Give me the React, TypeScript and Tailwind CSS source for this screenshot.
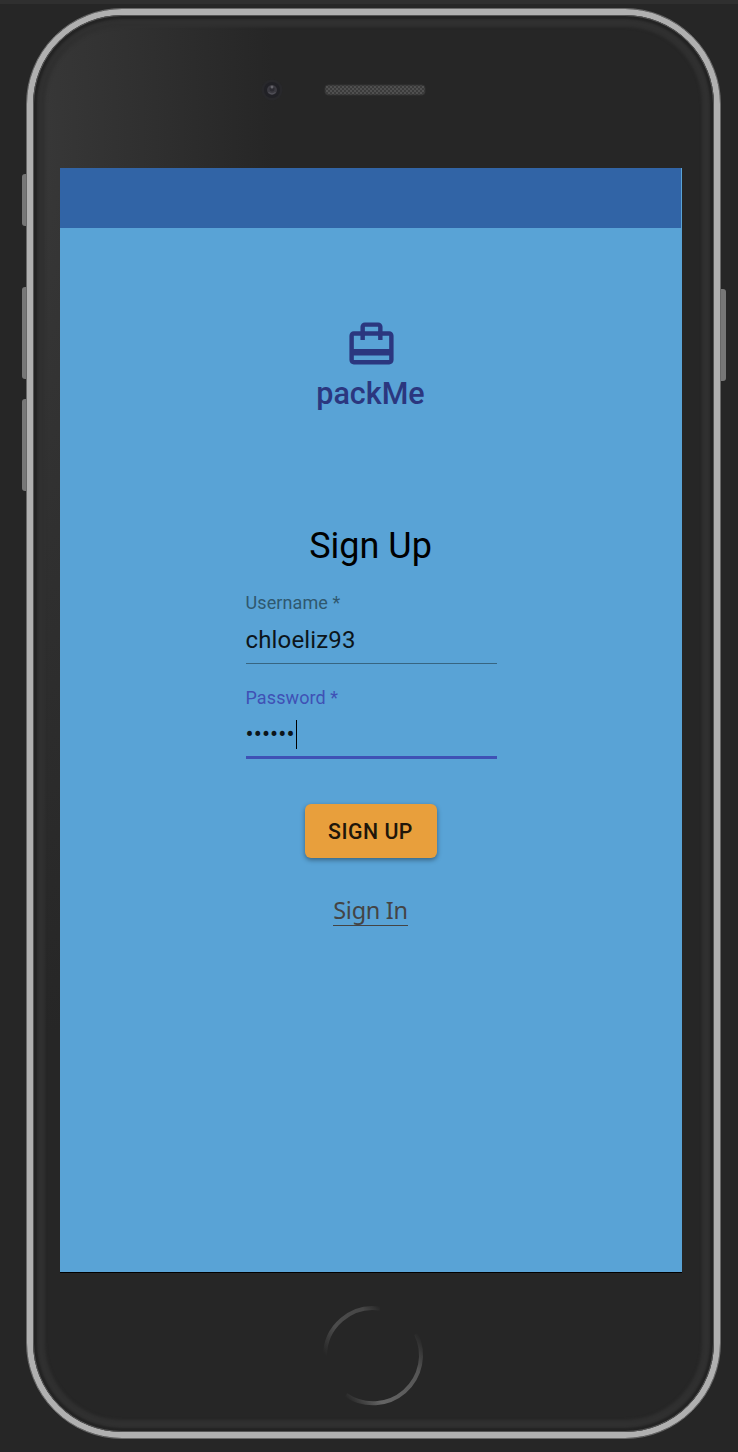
import React from "react";

function CardTravelIcon() {
  return (
    <svg viewBox="0 0 24 24" className="h-[53px] w-[53px] fill-[#2b377f]" aria-hidden="true">
      <path d="M20 6h-3V4c0-1.11-.89-2-2-2H9c-1.11 0-2 .89-2 2v2H4c-1.11 0-2 .89-2 2v11c0 1.11.89 2 2 2h16c1.11 0 2-.89 2-2V8c0-1.11-.89-2-2-2zM9 4h6v2H9V4zm11 15H4v-2h16v2zm0-5H4V8h3v2h2V8h6v2h2V8h3v6z" />
    </svg>
  );
}

function HomeButton() {
  return (
    <svg viewBox="0 0 110 110" className="h-[110px] w-[110px]" fill="none" aria-hidden="true">
      <defs>
        <linearGradient id="arcTop" x1="8" y1="55" x2="64" y2="8" gradientUnits="userSpaceOnUse">
          <stop offset="0" stopColor="#262626" />
          <stop offset=".35" stopColor="#4c4c4c" />
          <stop offset=".8" stopColor="#464646" />
          <stop offset="1" stopColor="#262626" />
        </linearGradient>
        <linearGradient id="arcBottom" x1="102" y1="35" x2="28" y2="97" gradientUnits="userSpaceOnUse">
          <stop offset="0" stopColor="#262626" />
          <stop offset=".25" stopColor="#555" />
          <stop offset=".75" stopColor="#646464" />
          <stop offset="1" stopColor="#262626" />
        </linearGradient>
      </defs>
      <path d="M7 55A48 48 0 0 1 62 7.500" stroke="url(#arcTop)" strokeWidth="4" />
      <path d="M98 33A48 48 0 0 1 28 94" stroke="url(#arcBottom)" strokeWidth="4" />
    </svg>
  );
}

function Speaker() {
  return (
    <svg viewBox="0 0 102 12" className="h-3 w-[102px]" aria-hidden="true">
      <defs>
        <pattern id="mesh" width="4" height="4" patternUnits="userSpaceOnUse">
          <rect width="4" height="4" fill="#3b3b3b" />
          <rect width="2" height="2" fill="#505050" />
          <rect x="2" y="2" width="2" height="2" fill="#505050" />
        </pattern>
      </defs>
      <rect x="1" y="1" width="100" height="10" rx="3" fill="url(#mesh)" stroke="#333" />
    </svg>
  );
}

function Camera() {
  return (
    <svg viewBox="0 0 24 24" className="h-6 w-6" aria-hidden="true">
      <circle cx="12" cy="12" r="10.500" fill="#28282b" />
      <circle cx="12" cy="12" r="8" fill="#212126" />
      <circle cx="12" cy="12" r="5" fill="#3b3a41" />
      <circle cx="12" cy="11" r="2.500" fill="#2c2b32" />
      <circle cx="12" cy="9" r="1.500" fill="#66656c" />
      <path d="M8.500 14.500q3.500 3 7 0" stroke="#55545c" fill="none" />
    </svg>
  );
}

function SignUpForm() {
  return (
    <form className="flex flex-col items-center" onSubmit={(e) => e.preventDefault()}>
      <h1 className="mt-[108px] pr-px text-[36px] leading-[48px] text-black">Sign Up</h1>
      <div className="mt-[21px] w-[251px]">
        <label className="block h-[24px] text-[18px] leading-[24px] tracking-[0.1px] text-[#2f586f]">Username *</label>
        <div className="mt-[10px] flex h-[39px] items-start border-b border-[#376581] text-[24px] leading-[30px] tracking-[0.150px] text-[#0c151b]">chloeliz93</div>
      </div>
      <div className="mt-[22px] w-[251px]">
        <label className="block h-[24px] text-[18px] leading-[24px] tracking-[0.1px] text-[#3f51b5]">Password *</label>
        <div className="mt-[10px] flex h-[39px] items-start border-b-3 border-[#3f51b5] text-[24px] leading-[29px] text-[#0c151b]">
          <span className="tracking-[0.100px]">••••••</span>
          <span className="ml-px h-[29px] w-px bg-black" />
        </div>
      </div>
      <button className="mt-[45px] mr-px h-[54px] w-[132px] rounded-[6px] bg-[#e89f3c] pt-px text-[21.300px] font-medium tracking-[0.500px] text-[#20160a] shadow-[0_2px_5px_rgba(0,0,0,0.4)]">SIGN UP</button>
      <a className="mt-[37px] mr-px border-b border-[#444] font-['Noto_Sans',sans-serif] text-[23.500px] leading-[30px] tracking-[-0.300px] text-[#444]">Sign In</a>
    </form>
  );
}

export default function App() {
  return (
    <div className="relative h-[1452px] w-[738px] overflow-hidden bg-[#262626] pt-2 pl-[26px] font-[Roboto,sans-serif]">
      <div className="absolute inset-x-0 top-0 h-1 bg-[#2f2f2f]" />
      <div className="absolute top-[174px] left-[22px] h-[52px] w-[5px] rounded-l-[3px] bg-[#777]" />
      <div className="absolute top-[287px] left-[22px] h-[92px] w-[5px] rounded-l-[3px] bg-[#777]" />
      <div className="absolute top-[399px] left-[22px] h-[92px] w-[5px] rounded-l-[3px] bg-[#777]" />
      <div className="absolute top-[289px] left-[720px] h-[92px] w-[6px] rounded-r-[3px] bg-[#777]" />
      <div className="relative h-[1431px] w-[695px] rounded-[96px] border border-[#686868] bg-[#262626]">
        <div className="h-full rounded-[95px] border-[6px] border-[#b0b0b0]">
          <div className="flex h-full flex-col rounded-[89px] border border-[#555] bg-[radial-gradient(ellipse_240px_900px_at_0px_120px,#383838_0%,#303030_45%,#262626_100%)] pl-[26px] shadow-[inset_0_0_2px_3px_#232323,inset_0_0_3px_11px_#303030]">
            <div className="flex h-[152px] pt-[62px] pl-[200px]">
              <Camera />
              <div className="mt-[6px] ml-[40px]"><Speaker /></div>
            </div>
            <main className="h-[1105px] w-[622px] border-b border-black bg-[#59a3d6]">
              <header className="h-[60px] w-[621px] bg-[#3164a6]" />
              <div className="flex flex-col items-center pt-[90px]">
                <CardTravelIcon />
                <div className="mt-[3px] pr-px text-[30.500px] leading-[40px] font-medium text-[#2b377f]">packMe</div>
              </div>
              <SignUpForm />
            </main>
            <div className="mt-[28px] ml-[258px]"><HomeButton /></div>
          </div>
        </div>
      </div>
    </div>
  );
}
